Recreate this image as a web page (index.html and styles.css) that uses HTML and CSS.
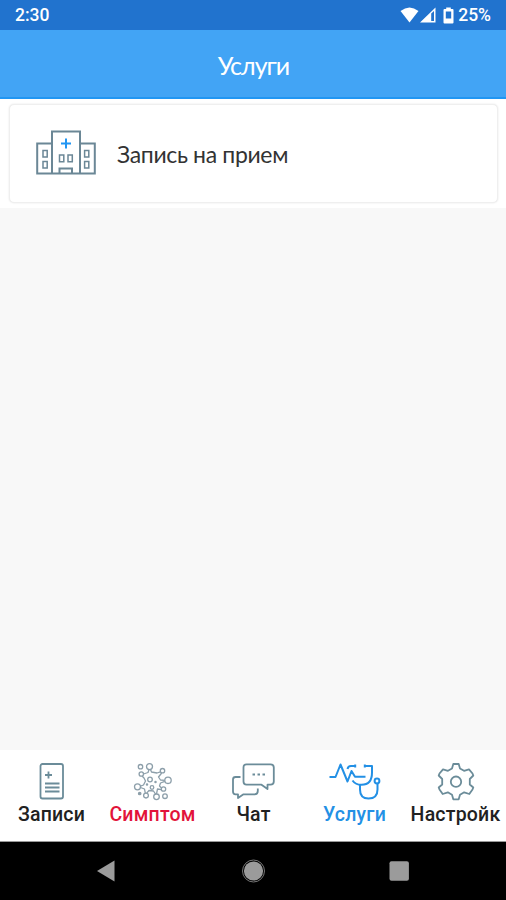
FILE: index.html
```html
<!DOCTYPE html>
<html lang="ru">
<head>
    <meta charset="utf-8">
    <title>Услуги</title>
    <link rel="stylesheet" href="styles.css">
</head>
<body>
    <div class="status-bar">
        <span class="time">2:30</span>
        <div class="status-icons">
            <svg class="wifi" width="19" height="16" viewBox="0 0 19 16"><path d="M0.5 4Q9.5 -3 18.5 4L9.5 15.5Z"/></svg>
            <svg class="signal" width="16" height="16" viewBox="0 0 16 16"><path fill-rule="evenodd" d="M0 15.5L15.5 0.5V15.5ZM11.2 6.5V14H14V4Z"/></svg>
            <svg class="battery" width="11" height="17" viewBox="0 0 11 17"><path fill-rule="evenodd" d="M3.2 0.5H7.8V2H9.5Q10.5 2 10.5 3V15.5Q10.5 16.5 9.5 16.5H1.5Q.5 16.5 .5 15.5V3Q.5 2 1.5 2H3.2ZM2.8 4.5V11.5H8.2V4.5Z"/></svg>
            <span class="percent">25%</span>
        </div>
    </div>

    <div class="header">
        <h1>Услуги</h1>
    </div>

    <div class="list">
        <div class="card">
            <svg class="card-icon" width="60" height="46" viewBox="0 0 60 46">
                <g class="line">
                    <path d="M16 43.5V1.5H44V43.5M16 13.5H1.2V43.5H58.8V13.5H44"/>
                    <path d="M23.5 43V38.5H36V43"/>
                    <path class="windows" d="M23.5 25H27.8V31.8H23.5ZM32 25H36.3V31.8H32ZM7 20.5H11.2V27H7ZM7 31.5H11.2V38H7ZM48.6 20.5H52.8V27H48.6ZM48.6 31.5H52.8V38H48.6Z"/>
                </g>
                <path class="cross" d="M30 8.5V18.5M25 13.5H35"/>
            </svg>
            <span class="card-title">Запись на прием</span>
        </div>
    </div>

    <div class="content"></div>

    <div class="tabs">
        <div class="tab">
            <svg class="tab-icon" width="60" height="40" viewBox="0 0 60 40">
                <rect x="18.5" y="2" width="22.5" height="34.5" rx="2"/>
                <path d="M26.5 9.5V16.5M23 13H30M23 21.5H37.5M23 25.5H37.5M23 29.5H37.5"/>
            </svg>
            <span class="tab-label">Записи</span>
        </div>
        <div class="tab virus">
            <svg class="tab-icon" width="60" height="40" viewBox="0 0 60 40">
                <circle cx="17.5" cy="4.7" r="2.2"/>
                <circle cx="26.5" cy="4.6" r="3"/>
                <circle cx="39.5" cy="8.7" r="2.2"/>
                <circle cx="45" cy="18.3" r="3.2"/>
                <circle cx="14.5" cy="24.8" r="3"/>
                <circle cx="23" cy="33.6" r="2.4"/>
                <circle cx="33.5" cy="34.8" r="2.8"/>
                <circle cx="42" cy="34.2" r="2.3"/>
                <circle cx="40.5" cy="27" r="2.2"/>
                <circle cx="18.3" cy="12" r="2.2"/>
                <circle cx="27" cy="17.5" r="2.3"/>
                <circle cx="29" cy="25.5" r="1.8"/>
                <circle class="dot" cx="16.7" cy="31.5" r="1.2"/>
                <circle class="dot" cx="32.5" cy="20" r=".6"/>
                <circle class="dot" cx="24" cy="22.5" r=".6"/>
                <path d="M26 7.5L25 10.5L20.5 12M27.5 7.6L28.5 10L34 11L37.5 9.8M38.7 11L35.5 15L37.5 18L41.8 18.3M41.8 19.3L37.5 21L36.5 24L38.5 26M38.3 27.7L34.5 27L33.5 32M32.5 32L30.5 29L26 28.5L23.7 31.2M22.3 31.2L21.5 27L17.5 25.5M17.5 24.2L20.5 23L22.5 19L21 16L19 14"/>
            </svg>
            <span class="tab-label">Симптом</span>
        </div>
        <div class="tab">
            <svg class="tab-icon" width="60" height="40" viewBox="0 0 60 40">
                <path d="M22.5 2.3H46.5Q49.8 2.3 49.8 5.5V19.5Q49.8 22.7 46.5 22.7H43.5V27L37.5 22.7H22.5Q19.5 22.7 19.5 19.5V5.5Q19.5 2.3 22.5 2.3Z"/>
                <path d="M16.5 15H11.5Q9 15 9 17.5V29.5Q9 32.3 11.5 32.3H14V36L19.5 32.3H30.5Q33.8 32.3 33.8 29V26.5"/>
                <path class="dots" d="M28.5 12.5H31M33.5 12.5H36M38.5 12.5H41"/>
            </svg>
            <span class="tab-label">Чат</span>
        </div>
        <div class="tab active">
            <svg class="tab-icon" width="60" height="40" viewBox="0 0 60 40">
                <path d="M4.5 15H10.5L15.5 2.5L22.5 19.5L26.5 9L30 14.7H40.5"/>
                <path d="M22.5 7Q23 4 26 4H30M39.5 4H47V10.5Q47 22.8 36.5 22.8Q30.5 22.8 27.5 18.5"/>
                <path d="M30.2 2.5V5.5M39.8 2.5V5.5M35 22.8V27.5Q35 36.5 43.5 36.5Q52.5 36.5 52.5 27.5V21.5"/>
                <circle cx="52" cy="19" r="2.4"/>
            </svg>
            <span class="tab-label">Услуги</span>
        </div>
        <div class="tab">
            <svg class="tab-icon" width="60" height="40" viewBox="0 0 60 40">
                <path d="M27.3 2H32.7L34 6.5L38 8.8L43 7.3L46.5 11.5L47.3 13.5L43.8 17V22.5L47.3 25.5L46.5 27.5L43.3 32L38.2 30.3L34 32.8L32.7 37.3H27.3L26 32.8L21.8 30.3L16.7 32L13.5 27.5L12.7 25.5L16.2 22.5V17L12.7 13.5L13.5 11.5L17 7.3L22 8.8L26 6.5Z"/>
                <circle cx="30" cy="19.7" r="5.2"/>
            </svg>
            <span class="tab-label">Настройк</span>
        </div>
    </div>

    <div class="nav-bar">
        <svg width="22" height="24" viewBox="0 0 22 24"><path d="M1 12L18.5 1.5V22.5Z"/></svg>
        <svg width="26" height="26" viewBox="0 0 26 26"><circle cx="13.5" cy="13" r="9.6"/><circle class="ring" cx="13.5" cy="13" r="11"/></svg>
        <svg width="22" height="22" viewBox="0 0 22 22"><rect x="1.5" y="1.3" width="19.4" height="19.4" rx="2"/></svg>
    </div>
</body>
</html>
```
FILE: styles.css
```css
* {
    box-sizing: border-box;
}

body {
    margin: 0;
    height: 900px;
    display: flex;
    flex-direction: column;
    background: #f8f8f8;
    font-family: Roboto, "Liberation Sans", sans-serif;
    overflow: hidden;
}

.status-bar {
    height: 30px;
    padding: 0 15px;
    display: flex;
    align-items: center;
    justify-content: space-between;
    background: #2173ce;
    color: #fff;
    font-size: 17.5px;
    font-weight: 500;
}

.status-icons {
    display: flex;
    align-items: center;
    fill: #fff;
}

.signal {
    margin-left: 1px;
}

.battery {
    margin: 0 4px 0 7px;
}

.header {
    height: 69px;
    display: flex;
    align-items: center;
    justify-content: center;
    background: #42a4f5;
    border-bottom: 2px solid #2196f3;
}

.header h1 {
    margin: 2px 0 0 1px;
    color: #fff;
    font-family: Lato, "Open Sans", sans-serif;
    font-size: 25px;
    font-weight: 400;
    letter-spacing: -1px;
}

.list {
    height: 109px;
    padding: 5px 8px 5px 9px;
    background: #fff;
}

.card {
    height: 99px;
    padding: 0 26px;
    display: flex;
    align-items: center;
    background: #fff;
    border: 1px solid #efefef;
    border-radius: 5px;
    box-shadow: 0 0 2px #e4e4e4;
}

.card-icon {
    margin-bottom: 2px;
    fill: none;
    stroke-width: 2;
}

.line {
    stroke: #6b8796;
}

.windows {
    stroke-width: 1.5;
}

.cross {
    stroke: #2196f3;
}

.card-title {
    margin-left: 21px;
    color: #333;
    font-family: Lato, "Open Sans", sans-serif;
    font-size: 23px;
    letter-spacing: -0.35px;
}

.content {
    flex: 1;
}

.tabs {
    height: 92px;
    padding: 12px 0 0 1px;
    display: flex;
    background: #fff;
    border-bottom: 1px solid #999;
}

.tab {
    flex: 1 1 0;
    min-width: 0;
    display: flex;
    flex-direction: column;
    align-items: center;
    color: #212121;
}

.tab-icon {
    fill: none;
    stroke: #6b8c99;
    stroke-width: 1.8;
    stroke-linejoin: round;
}

.tab-label {
    margin-top: 1px;
    font-size: 19.5px;
    line-height: 24px;
    font-weight: 500;
    letter-spacing: 0.2px;
    white-space: nowrap;
}

.virus {
    color: #e2133a;
}

.virus .tab-icon {
    stroke: #8d9faa;
    stroke-width: 1.3;
}

.virus .dot {
    fill: #8d9faa;
}

.active {
    color: #2390e5;
}

.active .tab-icon {
    stroke: #2390e5;
    stroke-width: 2;
}

.nav-bar {
    height: 58px;
    padding: 0 96px;
    display: flex;
    align-items: center;
    justify-content: space-between;
    background: #000;
    fill: #9b9b9b;
}

.ring {
    fill: none;
    stroke: #777;
    stroke-width: 1;
}
```
